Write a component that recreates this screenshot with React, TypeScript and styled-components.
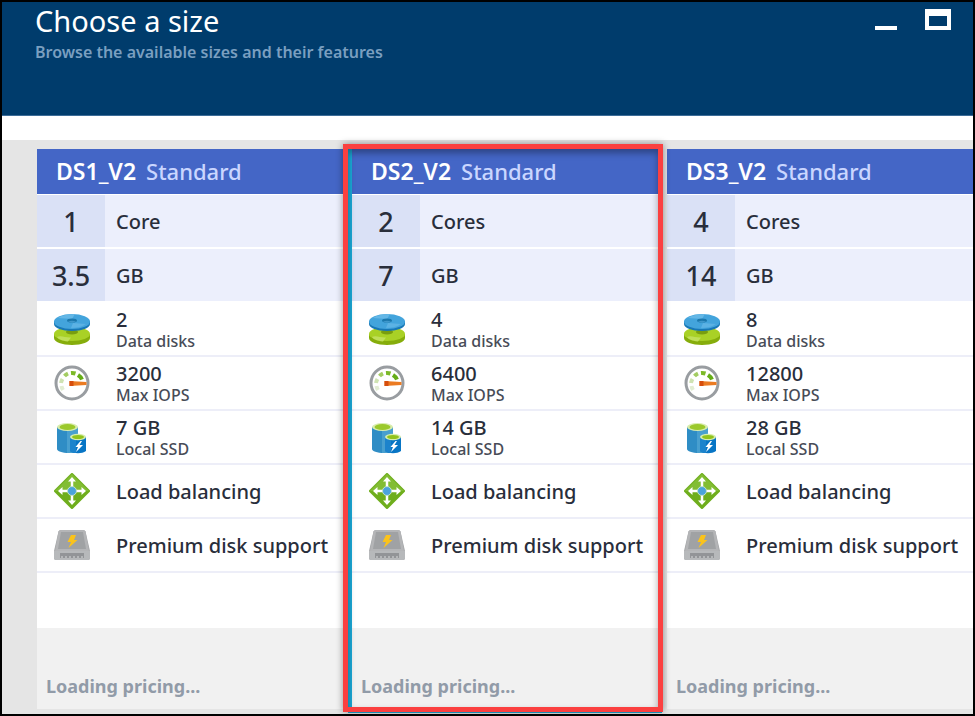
import React from "react";
import styled, { createGlobalStyle, css } from "styled-components";

const GlobalStyle = createGlobalStyle`
  *, *::before, *::after { box-sizing: border-box; }
  body {
    margin: 0;
    background: #000;
    font-family: "Noto Sans", "Open Sans", sans-serif;
    color: #292e3b;
  }
`;

const Blade = styled.main`
  display: flex;
  flex-direction: column;
  min-height: 100vh;
  border: 2px solid #000;
  background: #e5e5e5;
  overflow: hidden;
`;

const Header = styled.header`
  display: flex;
  justify-content: space-between;
  align-items: flex-start;
  min-height: 114px;
  padding: 0 22px 0 33px;
  background: #003c6c;
  border-bottom: 1px solid #3c6c98;
`;

const Title = styled.h1`
  margin: 0;
  font-size: 29px;
  line-height: 38px;
  font-weight: 400;
  color: #fff;
`;

const Subtitle = styled.p`
  margin: 0;
  font-size: 16px;
  line-height: 24px;
  font-weight: 600;
  color: #7a9fc0;
`;

const WindowControls = styled.div`
  display: flex;
  gap: 28px;
  padding-top: 6px;
`;

const IconButton = styled.button`
  display: block;
  padding: 0;
  border: 0;
  background: none;
  color: #fff;
  line-height: 0;
  cursor: pointer;
`;

const Spacer = styled.div`
  height: 24px;
  background: #fff;
`;

const CardGrid = styled.section`
  display: grid;
  grid-template-columns: repeat(3, minmax(0, 1fr));
  gap: 9px;
  padding: 9px 0 5px 35px;
`;

const Card = styled.article<{ $selected: boolean }>`
  position: relative;
  background: #fff;
  ${(p) =>
    p.$selected &&
    css`
      z-index: 1;
      box-shadow: 0 0 0 4px #1ba8d6;
    `}
`;

const Highlight = styled.div`
  position: absolute;
  inset: -5px -5px -3px -9px;
  border: 5px solid #fb4040;
  box-shadow: 0 0 7px rgba(0, 0, 0, 0.4), inset 0 4px 7px rgba(0, 0, 0, 0.34);
  pointer-events: none;
`;

const CardHead = styled.h2`
  display: flex;
  align-items: center;
  gap: 10px;
  height: 46px;
  margin: 0;
  padding: 0 0 2px 19px;
  background: #4466c6;
  border-bottom: 1px solid #fff;
  color: #fff;
  font-size: 23px;
  line-height: 30px;
  font-weight: 600;
  white-space: nowrap;
`;

const Tier = styled.span`
  font-size: 22px;
  font-weight: 500;
  color: #cad6ff;
`;

const Specs = styled.ul`
  margin: 0;
  padding: 0;
  list-style: none;
`;

const Row = styled.li<{ $tinted?: boolean }>`
  display: grid;
  grid-template-columns: 68px minmax(0, 1fr);
  height: 54px;
  background: ${(p) => (p.$tinted ? "#eceffc" : "#fff")};
  border-bottom: 2px solid ${(p) => (p.$tinted ? "#fff" : "#edeef8")};
`;

const Amount = styled.span`
  display: grid;
  place-items: center;
  padding-top: 2px;
  background: #dae1f6;
  font-size: 27px;
  line-height: 36px;
  font-weight: 500;
`;

const IconCell = styled.span`
  display: grid;
  place-items: center;
  padding-left: 2px;
`;

const RowText = styled.span`
  display: flex;
  flex-direction: column;
  justify-content: center;
  padding: 2px 0 0 11px;
  white-space: nowrap;
`;

const Label = styled.span`
  font-size: 20px;
  line-height: 22px;
  font-weight: 500;
`;

const Caption = styled.span`
  font-size: 16px;
  line-height: 20px;
  font-weight: 500;
  color: #484c57;
`;

const CardFoot = styled.footer`
  display: flex;
  align-items: flex-end;
  height: 81px;
  margin-top: 55px;
  padding: 0 9px 10px;
  background: #f1f1f1;
  color: #919ba8;
  font-size: 18px;
  line-height: 26px;
  font-weight: 700;
`;

const DisksIcon = () => (
  <svg width="36" height="36" viewBox="0 0 36 36" aria-hidden="true">
    <path d="M0 23v4c0 4 8 7 18 7s18-3 18-7v-4z" fill="#86ad0b" />
    <ellipse cx="18" cy="23" rx="18" ry="7" fill="#a9d126" />
    <path d="M3 26c4-2 9 1 14 .5l-3 4C8 30 4 28 3 26z" fill="#c0df5a" />
    <ellipse cx="18" cy="21" rx="6" ry="2.500" fill="#789d10" />
    <path d="M0 10v3c0 4 8 7 18 7s18-3 18-7v-3z" fill="#1878b6" />
    <ellipse cx="18" cy="10.500" rx="18" ry="7.500" fill="#43a4dc" />
    <path d="M4 7c4-3 11-4 17-4l-3 5z" fill="#64b7e6" />
    <path d="M32 13c-4 3-10 4-15 4l2-5z" fill="#5cb2e4" />
    <ellipse cx="18" cy="9.500" rx="5" ry="2" fill="#1b78ad" />
    <path d="M14 10.500c2 1.500 6 1.500 8 0-3-1-5-1-8 0z" fill="#3f97cb" />
  </svg>
);

const GaugeIcon = () => (
  <svg width="36" height="36" viewBox="0 0 36 36" aria-hidden="true">
    <circle cx="18" cy="18" r="16" fill="#fff" stroke="#999da1" strokeWidth="3" />
    <g fill="none" strokeWidth="4">
      <path d="M9 25a11 11 0 0 1-1.500-4" stroke="#e2edd2" />
      <path d="M7 18a11 11 0 0 1 1.500-4" stroke="#cfe3b2" />
      <path d="M10.500 11a11 11 0 0 1 3.500-2.500" stroke="#a4cd62" />
      <path d="M17 8a11 11 0 0 1 4.500.5" stroke="#7cb928" />
      <path d="M24 10a11 11 0 0 1 4 4.500" stroke="#65ad18" />
    </g>
    <path d="M15.500 16l17 1v3l-17 1z" fill="#eb7b22" />
    <path d="M15.500 16h4v5h-4z" fill="#d64e0d" />
  </svg>
);

const SsdIcon = () => (
  <svg width="36" height="36" viewBox="0 0 36 36" aria-hidden="true">
    <path d="M3 8v22c0 2 5 4 12 4V8z" fill="#2f8dc5" />
    <path d="M13 8h11v26H13z" fill="#489fcf" />
    <ellipse cx="13.500" cy="8" rx="10.500" ry="4" fill="#d9edae" />
    <ellipse cx="13.500" cy="8" rx="8" ry="3" fill="#9bc92c" />
    <path d="M16 18v14c4 3 12 3 16 0V18z" fill="#0875c5" />
    <path d="M16 18v14c2 1.500 4 2 6 2V18z" fill="#1c83cc" />
    <ellipse cx="24" cy="18" rx="8" ry="3.300" fill="#d7edaa" />
    <ellipse cx="24" cy="18" rx="6" ry="2" fill="#91c31b" />
    <path d="M26.500 22l-5 6h2.500l-2 5 7-7h-3.500l2.500-4z" fill="#fff" />
  </svg>
);

const BalanceIcon = () => (
  <svg width="36" height="36" viewBox="0 0 36 36" aria-hidden="true">
    <path d="M18 1.500L34.500 18 18 34.500 1.500 18z" fill="#6fae1d" stroke="#6fae1d" strokeWidth="3" strokeLinejoin="round" />
    <path d="M18 1L35 18H1z" fill="#82bd33" />
    <path d="M18 7v22M7 18h22" stroke="#fff" strokeWidth="2.500" />
    <path d="M18 4l4 4.500h-8zM18 32l4-4.500h-8zM4 18l4.500-4v8zM32 18l-4.500-4v8z" fill="#fff" />
    <circle cx="18" cy="18" r="4.500" fill="#4aa3dc" stroke="#c9e4c9" strokeWidth="1" />
  </svg>
);

const PremiumDiskIcon = () => (
  <svg width="36" height="36" viewBox="0 0 36 36" aria-hidden="true">
    <path d="M6 3h24l1.500 1.500L36 24v7q0 2-2 2H2q-2 0-2-2v-7L4.500 4.500z" fill="#a5a7a9" />
    <path d="M6 3h24l1.500 1.500L35 24H1L4.500 4.500z" fill="#b4b5b7" />
    <path d="M7 5h22l3 17H4z" fill="#a0a2a4" />
    <path d="M0 24h36v7q0 2-2 2H2q-2 0-2-2z" fill="#b7b9bb" />
    <path d="M6 26h24v5H6z" fill="#929497" />
    <path d="M8 29v3m4-3v3m4-3v3m4-3v3m4-3v3m4-3v3" stroke="#b5b7b9" strokeWidth="2" />
    <path d="M17 8h5l-2 5h3.500l-9 8 2.500-6h-3.500z" fill="#fbc31b" />
  </svg>
);

const MinimizeIcon = () => (
  <svg width="22" height="26" viewBox="0 0 22 26" aria-hidden="true">
    <path d="M0 18h22v4H0z" fill="currentColor" />
  </svg>
);

const MaximizeIcon = () => (
  <svg width="26" height="26" viewBox="0 0 26 26" aria-hidden="true">
    <path d="M0 1h26v21H0zM4 8v10h18V8z" fill="currentColor" fillRule="evenodd" />
  </svg>
);

type Size = {
  name: string;
  cores: string;
  memory: string;
  disks: string;
  iops: string;
  ssd: string;
  selected?: boolean;
};

const sizes: Size[] = [
  { name: "DS1_V2", cores: "1", memory: "3.5", disks: "2", iops: "3200", ssd: "7 GB" },
  { name: "DS2_V2", cores: "2", memory: "7", disks: "4", iops: "6400", ssd: "14 GB", selected: true },
  { name: "DS3_V2", cores: "4", memory: "14", disks: "8", iops: "12800", ssd: "28 GB" },
];

const SpecRow = ({ icon, label, caption }: { icon: React.ReactNode; label: string; caption?: string }) => (
  <Row>
    <IconCell>{icon}</IconCell>
    <RowText>
      <Label>{label}</Label>
      {caption && <Caption>{caption}</Caption>}
    </RowText>
  </Row>
);

const AmountRow = ({ amount, unit }: { amount: string; unit: string }) => (
  <Row $tinted>
    <Amount>{amount}</Amount>
    <RowText>
      <Label>{unit}</Label>
    </RowText>
  </Row>
);

const SizeCard = ({ size }: { size: Size }) => (
  <Card $selected={!!size.selected}>
    <CardHead>
      {size.name}
      <Tier>Standard</Tier>
    </CardHead>
    <Specs>
      <AmountRow amount={size.cores} unit={size.cores === "1" ? "Core" : "Cores"} />
      <AmountRow amount={size.memory} unit="GB" />
      <SpecRow icon={<DisksIcon />} label={size.disks} caption="Data disks" />
      <SpecRow icon={<GaugeIcon />} label={size.iops} caption="Max IOPS" />
      <SpecRow icon={<SsdIcon />} label={size.ssd} caption="Local SSD" />
      <SpecRow icon={<BalanceIcon />} label="Load balancing" />
      <SpecRow icon={<PremiumDiskIcon />} label="Premium disk support" />
    </Specs>
    <CardFoot>Loading pricing...</CardFoot>
    {size.selected && <Highlight />}
  </Card>
);

export default function App() {
  return (
    <>
      <GlobalStyle />
      <Blade>
        <Header>
          <div>
            <Title>Choose a size</Title>
            <Subtitle>Browse the available sizes and their features</Subtitle>
          </div>
          <WindowControls>
            <IconButton type="button" aria-label="Minimize">
              <MinimizeIcon />
            </IconButton>
            <IconButton type="button" aria-label="Maximize">
              <MaximizeIcon />
            </IconButton>
          </WindowControls>
        </Header>
        <Spacer />
        <CardGrid aria-label="Available sizes">
          {sizes.map((size) => (
            <SizeCard key={size.name} size={size} />
          ))}
        </CardGrid>
      </Blade>
    </>
  );
}
